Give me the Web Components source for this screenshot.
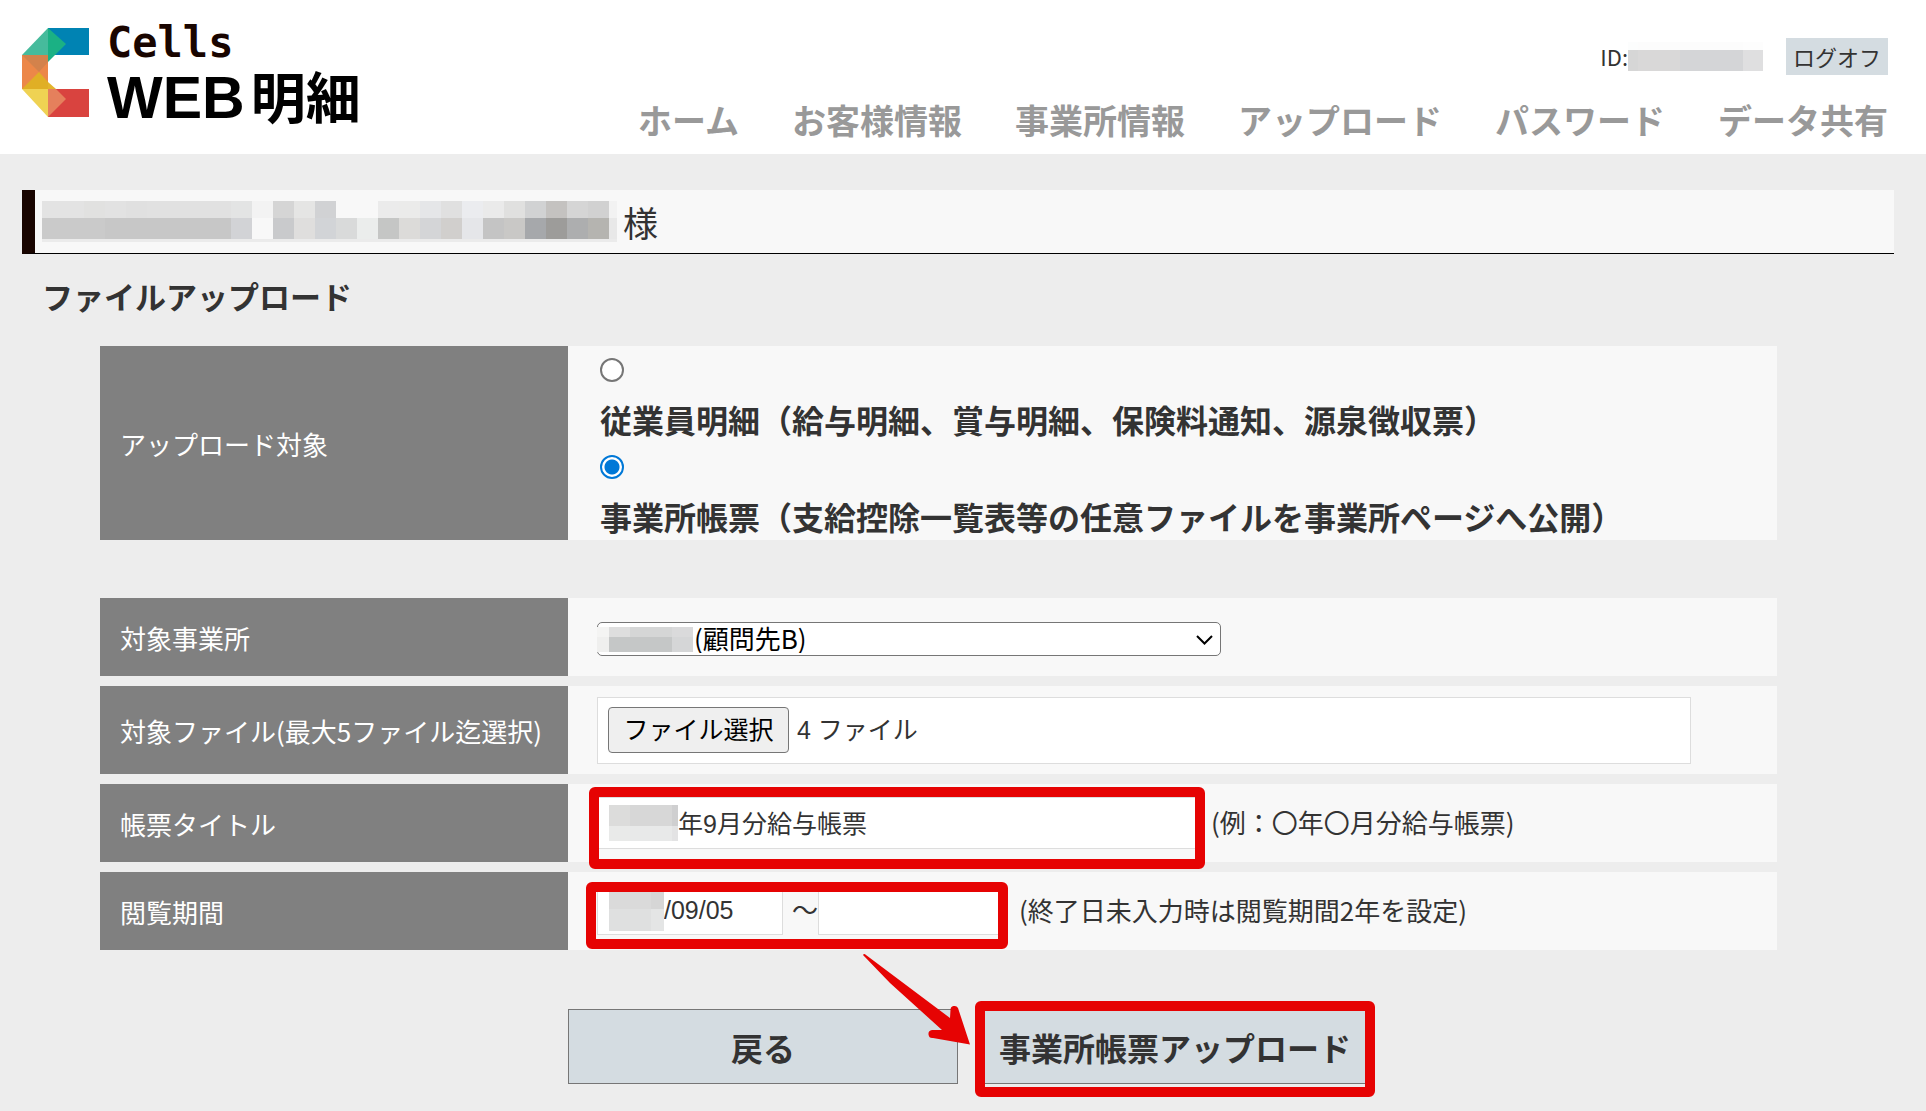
<!DOCTYPE html>
<html lang="ja">
<head>
<meta charset="utf-8">
<meta name="viewport" content="width=device-width, initial-scale=1">
<title>Cells WEB明細</title>
<style>
  html, body { margin: 0; min-height: 100%; background: #ededed; }
  body { font-family: "Noto Sans CJK JP", sans-serif; color: #333; }
</style>
</head>
<body>
<upload-page></upload-page>

<script>
const define = (name, html, setup) => {
  const template = document.createElement('template');
  template.innerHTML = html;
  customElements.define(name, class extends HTMLElement {
    constructor() {
      super();
      this.attachShadow({ mode: 'open' }).append(template.content.cloneNode(true));
    }
    connectedCallback() { if (setup) setup(this, this.shadowRoot); }
  });
};

/* Redacted value. Attributes: cell (column widths), heights (row heights), rows (colours, rows split by ";") */
define('pixel-mask', `
<style>
  :host { display: block; flex: none; overflow: hidden; }
  .row { display: flex; }
  .row span { flex: none; height: 100%; }
</style>`, (host, root) => {
  const widths = host.getAttribute('cell').split(' ').map(Number);
  const heights = host.getAttribute('heights').split(' ');
  host.getAttribute('rows').split(';').forEach((line, r) => {
    const row = document.createElement('div');
    row.className = 'row';
    row.style.height = heights[r] + 'px';
    line.trim().split(/\s+/).forEach((c, i) => {
      const s = document.createElement('span');
      s.style.width = (widths[i] ?? widths[widths.length - 1]) + 'px';
      s.style.background = '#' + c;
      row.append(s);
    });
    root.append(row);
  });
});

define('cells-logo', `
<style>
  :host { display: block; }
  a { display: flex; gap: 18px; text-decoration: none; color: #000; }
  svg { width: 67px; height: 89px; margin-top: 28px; flex: none; }
  .words { display: flex; flex-direction: column; padding-top: 20px; }
  .cells { font: bold 42px/46px "DejaVu Sans Mono", monospace; color: #190500; }
  .product { display: flex; align-items: baseline; font: bold 59px/56px "Liberation Sans", sans-serif; white-space: nowrap; }
  .kanji { font: bold 55px/56px "Noto Sans CJK JP", sans-serif; margin-left: 6px; }
</style>
<a href="#">
  <svg viewBox="22 28 67 89" aria-hidden="true">
    <path fill="#0083b3" d="M48 28H89V55H48Z"/>
    <path fill="#46bb9c" d="M48 28L22 55H48Z"/>
    <path fill="#1bb184" d="M48 28L66 44L48 62Z"/>
    <path fill="#ec8748" d="M22 55H48V89H22Z"/>
    <path fill="#d3824b" d="M22 55H48V62L39 72Z"/>
    <path fill="#e0af25" d="M22 89L39 72L48 82V89Z"/>
    <path fill="#efd253" d="M22 89H48V117Z"/>
    <path fill="#e3b52c" d="M48 82L56 89H48Z"/>
    <path fill="#d9433f" d="M48 89H89V117H48Z"/>
    <path fill="#e5805c" d="M48 89H56L66 99L48 117Z"/>
  </svg>
  <span class="words">
    <span class="cells">Cells</span>
    <span class="product"><span>WEB</span><span class="kanji">明細</span></span>
  </span>
</a>`);

define('site-header', `
<style>
  :host { display: flex; justify-content: space-between; box-sizing: border-box; height: 154px; padding: 0 38px 0 22px; background: #fff; }
  .right { display: flex; flex-direction: column; align-items: flex-end; }
  .account { display: flex; align-items: center; margin-top: 38px; font-size: 22px; line-height: 37px; }
  pixel-mask { margin-right: 23px; }
  button { font: 22px/37px "Noto Sans CJK JP", sans-serif; height: 37px; width: 102px; padding: 0; border: 0; background: #d4dce1; color: #333; }
  nav { display: flex; gap: 53px; margin-top: 20px; }
  nav a { font-weight: bold; font-size: 34px; line-height: 50px; color: #999; text-decoration: none; white-space: nowrap; }
</style>
<cells-logo></cells-logo>
<div class="right">
  <div class="account">
    <span>ID:</span>
    <pixel-mask cell="10 42 63 20" heights="8 21" rows="fcfdfd fcfcfc fcfcfc fdfdfd;d6d6d6 d9d8d8 d4d5d7 dfdfe0"></pixel-mask>
    <button type="button">ログオフ</button>
  </div>
  <nav>
    <a href="#">ホーム</a><a href="#">お客様情報</a><a href="#">事業所情報</a><a href="#">アップロード</a><a href="#">パスワード</a><a href="#">データ共有</a>
  </nav>
</div>`);

define('customer-bar', `
<style>
  :host { display: flex; align-items: center; box-sizing: border-box; height: 64px; border-left: 13px solid #190500; border-bottom: 1px solid #000; background: #f8f8f8; padding-left: 7px; font-size: 35px; line-height: 50px; }
  .name { display: flex; align-items: center; gap: 6px; }
</style>
<div class="name">
  <pixel-mask cell="21 21 21 21 21 21 21 21 21 21 21 21 21 21 21 21 21 21 21 21 21 21 21 21 21 21 21 8" heights="17 21 3"
    rows="e3e3e3 e3e3e3 e1e1e0 e2e2e2 e0e0e0 e1e1e1 e1e1e1 e1e1e1 e1e1e1 e3e4e4 f3f3f3 d5d5d5 e5e5e4 d1d2d4 f8f8f8 f8f8f8 ebebeb ebebea e5e6e8 e0e0e0 ebecef eaeaea e0e0df d1d2d3 c4c2c0 d5d5d5 d1d1d1 f2f2f2;
          cacaca cacaca cacaca c7c7c7 c7c7c7 c7c7c7 c7c7c7 c7c7c7 c7c7c7 d2d3d6 f8f8f8 c9cacc dfdedd d2d4d7 d9dada ebedec c5c6c5 dcdbd9 d4d5d7 d1cfcd e5e6e9 c4c4c4 c9c8c6 a6a8ab 9d9c9a adaeaf b5b4b0 e8e8e8;
          ebebeb ebebeb ebebeb ebebeb ebebeb ebebeb ebebeb ebebeb ebebeb ebebeb ebebeb ebebeb ebebeb ebebeb ebebeb ebebeb ebebeb ebebeb ebebeb ebebeb ebebeb ebebeb ebebeb ebebeb ebebeb ebebeb ebebeb ebebeb"></pixel-mask>
  <slot></slot>
</div>`);

define('form-row', `
<style>
  :host { display: flex; min-height: 78px; font-size: 26px; line-height: 38px; }
  .head { flex: 0 0 468px; box-sizing: border-box; display: flex; align-items: center; padding: 2px 0 0 20px; background: #808080; color: #fff; white-space: nowrap; }
  .body { flex: 1; min-width: 0; display: flex; align-items: center; padding: 0 86px 0 29px; background: #f8f8f8; }
</style>
<div class="head"><slot name="label"></slot></div>
<div class="body"><slot></slot></div>`);

/* Red highlight drawn around whatever is slotted; the overhang comes from --over */
define('mark-frame', `
<style>
  :host { display: flex; align-items: center; position: relative; }
  .ring { position: absolute; inset: var(--over); border: 10px solid #e60303; border-radius: 6px; pointer-events: none; }
</style>
<slot></slot><div class="ring"></div>`);

define('upload-form', `
<style>
  :host { display: block; padding: 0 149px 26px 100px; }
  * { box-sizing: border-box; }
  form { display: flex; flex-direction: column; }
  .rows { display: flex; flex-direction: column; gap: 10px; margin-top: 58px; }
  .choices { display: flex; flex-direction: column; align-items: flex-start; padding-left: 3px; font-weight: bold; font-size: 32px; white-space: nowrap; }
  .choices input { appearance: none; width: 24px; height: 24px; margin: 12px 0 13px; border: 2px solid #767676; border-radius: 50%; background: #fff; }
  .choices input:checked { border-color: #0078d7; background: radial-gradient(circle, #0078d7 7px, #fff 8px); }
  .choices label { line-height: 48px; }
  .select { position: relative; display: flex; width: 624px; margin-top: 4px; }
  .select pixel-mask { position: absolute; left: 0; top: 5px; }
  .select svg { position: absolute; right: 8px; top: 12px; width: 17px; height: 12px; pointer-events: none; }
  select { appearance: none; width: 100%; height: 34px; padding: 0 30px 2px 96px; border: 1px solid #767676; border-radius: 5px; background: #fff; color: #000; font: 26px/30px "Noto Sans CJK JP", sans-serif; }
  .field { display: flex; align-items: center; background: #fff; border: 1px solid #ddd; padding-left: 11px; }
  .field input { flex: 1; min-width: 0; width: 0; height: 100%; border: 0; padding: 0 0 2px; outline: 0; background: transparent; color: #333; font: 25px/36px "Liberation Sans", "Noto Sans CJK JP", sans-serif; }
  .file { flex: 1; height: 67px; padding-left: 10px; gap: 8px; font: 25px/36px "Liberation Sans", "Noto Sans CJK JP", sans-serif; }
  .file button { width: 181px; height: 46px; padding: 0; border: 1px solid #767676; border-radius: 4px; background: #efefef; color: #000; font: inherit; }
  .title { width: 608px; height: 52px; }
  .date { width: 186px; height: 48px; }
  .tilde { width: 35px; padding: 0 0 4px 9px; }
  .over-title { --over: -10px 0 -20px -8px; }
  .over-date { --over: -5px -4px -14px -11px; }
  .hint { white-space: nowrap; padding: 0 0 3px 6px; }
  .over-date + .hint { padding-left: 15px; }
  .tall { min-height: 88px; }
  .actions { display: flex; justify-content: center; gap: 22px; margin: 59px 0 0 61px; }
  .actions button { width: 390px; height: 75px; padding: 0; border: 1px solid #767676; background: #d4dce1; color: #333; font: bold 32px/48px "Noto Sans CJK JP", sans-serif; }
  .over-send { --over: -8px -5px -13px -5px; }
  .over-send button { border-left: 0; border-right: 0; }
  .arrow { position: absolute; left: -130px; top: -69px; width: 140px; height: 120px; pointer-events: none; }
</style>
<form>
  <form-row>
    <span slot="label" id="target">アップロード対象</span>
    <div class="choices" role="radiogroup" aria-labelledby="target">
      <input type="radio" name="target" id="staff"><label for="staff">従業員明細（給与明細、賞与明細、保険料通知、源泉徴収票）</label>
      <input type="radio" name="target" id="office" checked><label for="office">事業所帳票（支給控除一覧表等の任意ファイルを事業所ページへ公開）</label>
    </div>
  </form-row>
  <div class="rows">
    <form-row>
      <label slot="label" for="company">対象事業所</label>
      <div class="select">
        <select id="company"><option>(顧問先B)</option></select>
        <pixel-mask cell="12 21 42 21" heights="10 15" rows="f4f4f3 dedede d5d6d6 dadadb;efefee c5c7c7 c5c7c7 d5d6d7"></pixel-mask>
        <svg viewBox="0 0 17 12" aria-hidden="true"><path d="M1 2L8.500 9.500L16 2" fill="none" stroke="#000" stroke-width="2"/></svg>
      </div>
    </form-row>
    <form-row class="tall">
      <label slot="label" for="files">対象ファイル(最大5ファイル迄選択)</label>
      <div class="field file">
        <button type="button" id="choose">ファイル選択</button>
        <span>4 ファイル</span>
        <input type="file" id="files" multiple hidden>
      </div>
    </form-row>
    <form-row>
      <label slot="label" for="title">帳票タイトル</label>
      <mark-frame class="over-title">
        <div class="field title">
          <pixel-mask cell="21 42 6" heights="21 15" rows="dcdcdb d7d7d7 cfcfd0;e9eae9 e8e9e9 e3e3e4"></pixel-mask>
          <input id="title" type="text" value="年9月分給与帳票">
        </div>
      </mark-frame>
      <span class="hint">(例：〇年〇月分給与帳票)</span>
    </form-row>
    <form-row>
      <label slot="label" for="from">閲覧期間</label>
      <mark-frame class="over-date">
        <div class="field date">
          <pixel-mask cell="42 13" heights="17 22" rows="dadada d6d6d6;dfe0e0 e4e5e5"></pixel-mask>
          <input id="from" type="text" value="/09/05">
        </div>
        <span class="tilde">～</span>
        <div class="field date"><input id="to" type="text" aria-label="閲覧期間の終了日"></div>
      </mark-frame>
      <span class="hint">(終了日未入力時は閲覧期間2年を設定)</span>
    </form-row>
  </div>
  <div class="actions">
    <button type="button">戻る</button>
    <mark-frame class="over-send">
      <button type="button">事業所帳票アップロード</button>
      <svg class="arrow" viewBox="850 940 140 120" aria-hidden="true">
        <path fill="#e60303" d="M863 955Q864 953 866 955L950 1018L950.500 1010A4 4 0 0 1 958 1008L970 1044.500L933 1038A4 4 0 0 1 932 1030L942 1030L890 983Z"/>
      </svg>
    </mark-frame>
  </div>
</form>`, (host, root) => {
  root.getElementById('choose').onclick = () => root.getElementById('files').click();
});

define('upload-page', `
<style>
  :host { display: block; }
  customer-bar { margin: 36px 32px 0 22px; }
  h1 { margin: 19px 0 27px 42px; font-size: 31px; line-height: 46px; }
</style>
<site-header></site-header>
<main>
  <customer-bar>様</customer-bar>
  <h1>ファイルアップロード</h1>
  <upload-form></upload-form>
</main>`);
</script>
</body>
</html>
